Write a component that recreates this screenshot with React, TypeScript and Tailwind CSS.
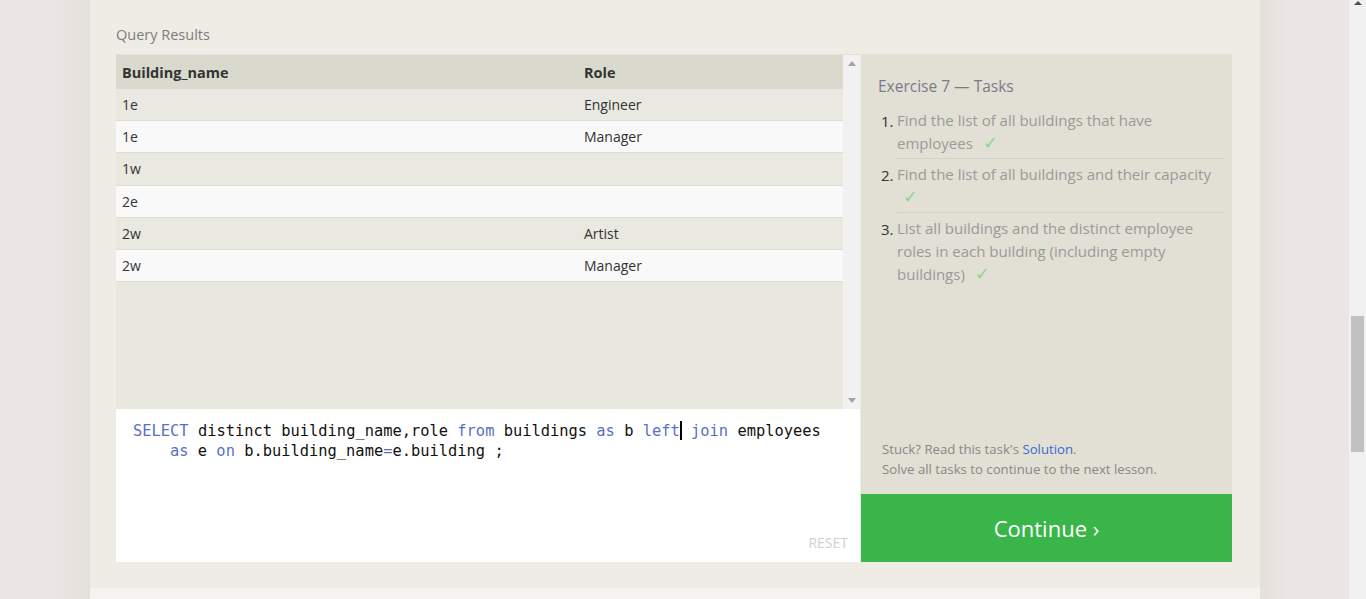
const rows = [
  { name: "1e", role: "Engineer" },
  { name: "1e", role: "Manager" },
  { name: "1w", role: "" },
  { name: "2e", role: "" },
  { name: "2w", role: "Artist" },
  { name: "2w", role: "Manager" },
];

const sans = { fontFamily: '"Open Sans", "Noto Sans", sans-serif' };

function Kw({ children }: { children: React.ReactNode }) {
  return <span className="text-[#5a6fc4]">{children}</span>;
}

function Check() {
  return (
    <>
      {" "}
      <span className="ml-[6px] inline-block text-[18px] leading-[20px] text-[#8fd58e]">✓</span>
    </>
  );
}

export default function App() {
  return (
    <div className="flex h-[599px] w-[1366px] overflow-hidden bg-[#ebe6e3]" style={sans}>
      {/* left gutter */}
      <div className="w-[90px] shrink-0 bg-gradient-to-r from-[#ebe6e3] from-60% to-[#e3dfdb]" />

      {/* main card */}
      <div className="flex w-[1170px] shrink-0 flex-col">
        <div className="h-[588px] bg-[#efece5] pl-[26px] pr-[28px] pt-[25px]">
          <div className="text-[14.5px] leading-[20px] text-[#7c7c7c]">Query Results</div>

          <div className="mt-[9px] flex gap-px">
            {/* left column */}
            <div className="flex w-[744px] flex-col">
              <div className="flex h-[355px] border-t border-[#e2e0d8] bg-[#e9e8e0]">
                <div className="flex-1">
                  <div className="flex h-[34px] items-center bg-[#dad9cd] pt-[1px] text-[14.5px] font-bold text-[#333]">
                    <div className="w-[468px] pl-[6px]">Building_name</div>
                    <div>Role</div>
                  </div>
                  {rows.map((r, i) => (
                    <div
                      key={i}
                      className={
                        "flex h-[32.2px] items-center border-b border-[#dedcd6] text-[14px] text-[#333] " +
                        (i % 2 === 0 ? "bg-[#e9e8e1]" : "bg-[#f9f9f9]")
                      }
                    >
                      <div className="w-[468px] pl-[6px]">{r.name}</div>
                      <div>{r.role}</div>
                    </div>
                  ))}
                </div>
                {/* scrollbar */}
                <div className="flex w-[17px] flex-col items-center justify-between bg-[#f1f1f1] py-[6px]">
                  <svg width="8" height="5" viewBox="0 0 8 5">
                    <path d="M0 5 L4 0 L8 5 Z" fill="#a3a3a3" />
                  </svg>
                  <svg width="8" height="5" viewBox="0 0 8 5">
                    <path d="M0 0 L4 5 L8 0 Z" fill="#a3a3a3" />
                  </svg>
                </div>
              </div>

              {/* editor */}
              <div
                className="relative h-[153px] bg-white pl-[17px] pt-[12px] text-[15.4px] leading-[20px] text-[#111]"
                style={{ fontFamily: '"DejaVu Sans Mono", "Liberation Mono", monospace' }}
              >
                <div className="whitespace-pre">
                  <Kw>SELECT</Kw> distinct building_name,role <Kw>from</Kw> buildings <Kw>as</Kw> b <Kw>left</Kw>
                  <span className="inline-block h-[19px] w-0 border-l-2 border-black align-[-4px]" /> <Kw>join</Kw>{" "}
                  employees
                </div>
                <div className="whitespace-pre pl-[37px]">
                  <Kw>as</Kw> e <Kw>on</Kw> b.building_name<Kw>=</Kw>e.building ;
                </div>
                <div
                  className="absolute bottom-[9px] right-[12px] text-[14px] text-[#cfcfcf]"
                  style={sans}
                >
                  RESET
                </div>
              </div>
            </div>

            {/* right column */}
            <div className="flex w-[371px] flex-col">
              <div className="flex h-[440px] flex-col justify-between bg-[#e2dfd4] pb-[15px] pl-[17px] pr-[7px] pt-[21px]">
                <div>
                  <div className="text-[15.5px] leading-[22px] text-[#787c86]">Exercise 7 — Tasks</div>
                  <ol className="mt-[12px] text-[15px] leading-[23px] text-[#9a9a9a]">
                    <li className="flex">
                      <span className="w-[19px] shrink-0 pl-[3px] pt-[1px] text-[#333]">1.</span>
                      <span className="flex-1 border-b border-[#d3d0c6] pb-[3px]">
                        Find the list of all buildings that have employees
                        <Check />
                      </span>
                    </li>
                    <li className="flex">
                      <span className="w-[19px] shrink-0 pl-[3px] pt-[5px] text-[#333]">2.</span>
                      <span className="flex-1 border-b border-[#d3d0c6] pb-[3px] pt-[4px]">
                        Find the list of all buildings and their capacity
                        <Check />
                      </span>
                    </li>
                    <li className="flex">
                      <span className="w-[19px] shrink-0 pl-[3px] pt-[5px] text-[#333]">3.</span>
                      <span className="flex-1 pt-[4px]">
                        List all buildings and the distinct employee roles in each building (including empty buildings)
                        <Check />
                      </span>
                    </li>
                  </ol>
                </div>
                <div className="pl-[4px] text-[13.2px] leading-[20px] text-[#888]">
                  <div>
                    Stuck? Read this task's <span className="text-[#3b68d3]">Solution</span>.
                  </div>
                  <div>Solve all tasks to continue to the next lesson.</div>
                </div>
              </div>
              <div className="flex h-[68px] items-center justify-center bg-[#3ab54a] text-[22px] text-white">
                Continue ›
              </div>
            </div>
          </div>
        </div>
        <div className="flex-1 bg-[#f4f3ef]" />
      </div>

      {/* right gutter */}
      <div className="w-[89px] shrink-0 bg-gradient-to-r from-[#e3dfdb] to-[#ebe6e3] to-30%" />

      {/* page scrollbar */}
      <div className="relative w-[17px] shrink-0 bg-[#f1f1f1]">
        <svg className="absolute left-[5px] top-[1px]" width="8" height="4" viewBox="0 0 8 4">
          <path d="M0 4 L4 0 L8 4 Z" fill="#505050" />
        </svg>
        <div className="absolute left-[2px] top-[316px] h-[136px] w-[13px] bg-[#c1c1c1]" />
      </div>
    </div>
  );
}
